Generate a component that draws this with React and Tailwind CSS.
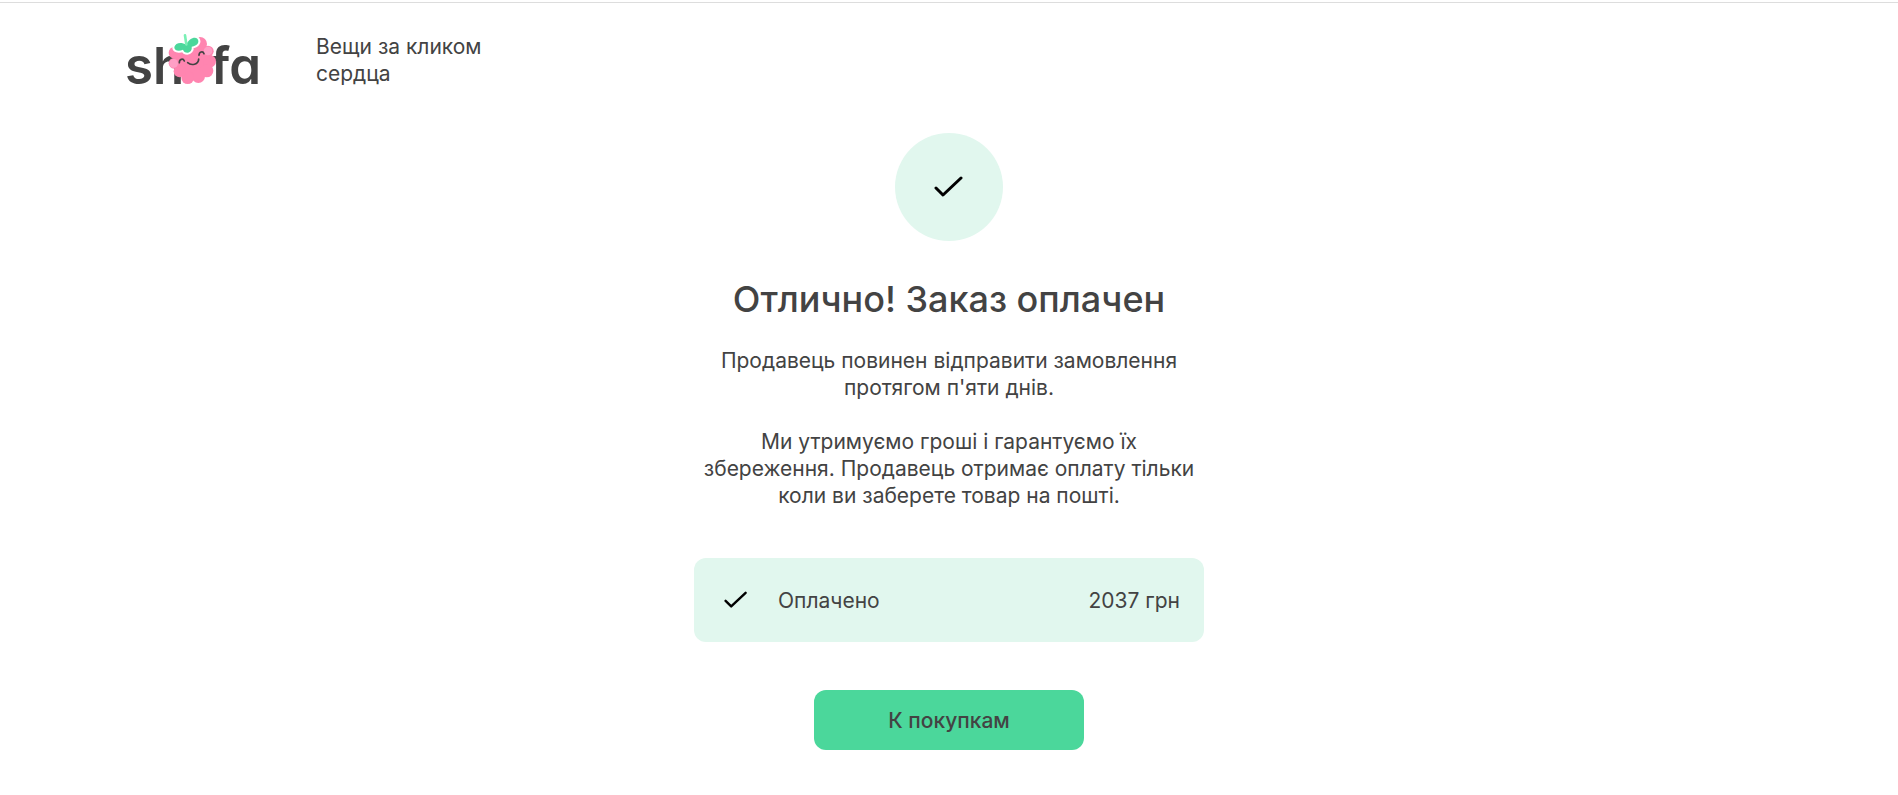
const FONT = "font-['Inter','Liberation_Sans',sans-serif]"

function Berry({ className }) {
  return (
    <svg viewBox="171 39 150 156" className={className} aria-hidden="true">
      <g fill="#ff85b0">
        <circle cx="246" cy="121" r="53" />
        <circle cx="270" cy="72" r="21" />
        <circle cx="194" cy="98" r="18" />
        <circle cx="299" cy="124" r="19" />
        <circle cx="290" cy="152" r="20" />
        <circle cx="265" cy="169" r="20" />
        <circle cx="233" cy="173" r="19" />
        <circle cx="209" cy="154" r="18" />
        <circle cx="294" cy="94" r="17" />
        <circle cx="192" cy="130" r="16" />
      </g>
      <circle cx="294" cy="93" r="13" fill="#ff9fc5" />
      <circle cx="191" cy="130" r="13" fill="#ff9fc5" />

      {/* Leaf */}
      <path
        d="M229 74C236 56 254 49 262 56C270 66 262 77 245 80C247 91 239 98 232 98C225 98 221 94 219 89C205 96 192 91 193 81C196 69 212 64 229 74Z"
        fill="#4bd79b"
        stroke="#fff"
        strokeWidth="12"
        strokeLinejoin="round"
        paintOrder="stroke"
      />
      <path d="M225 46L229 73" fill="none" stroke="#7af0b5" strokeWidth="8" strokeLinecap="round" />

      {/* Face */}
      <g fill="none" stroke="#434343" strokeWidth="5" strokeLinecap="round">
        <path d="M208 128C208 117 219 114 223 123" />
        <path d="M267 106C267 95 279 92 282 101" />
        <path d="M233 128C244 138 266 134 266 117" />
      </g>
    </svg>
  )
}

function Logo() {
  return (
    <span
      role="img"
      aria-label="shafa"
      className="relative flex justify-between w-[136px] text-[51px] leading-[66px] font-semibold [font-feature-settings:'cv11']"
    >
      <span>sh</span>
      <span>fa</span>
      <Berry className="absolute left-[42px] top-0 w-[50px] h-[52px]" />
    </span>
  )
}

function Check({ className }) {
  return (
    <svg
      viewBox="0 0 30 22"
      className={className}
      fill="none"
      stroke="#000"
      strokeWidth="3"
      strokeLinecap="round"
      strokeLinejoin="round"
      aria-hidden="true"
    >
      <path d="M2 12L9 19L27 2" />
    </svg>
  )
}

export default function App() {
  return (
    <div className={`${FONT} pt-0.5 bg-white text-[21px] leading-[27px] text-[#434343]`}>
      <header className="border-t border-[#dddddd] px-[125px] pt-[30px] flex items-start gap-[55px]">
        <a href="/" className="shrink-0">
          <Logo />
        </a>
        <p className="w-[180px]">Вещи за кликом сердца</p>
      </header>

      <main className="max-w-[510px] mx-auto pt-[34px] flex flex-col items-center text-center">
        <div className="size-[108px] rounded-full bg-[#e1f7ee] flex items-center justify-center">
          <Check className="w-[30px] h-[22px]" />
        </div>

        <h1 className="mt-9 text-[36px] leading-[44px] font-medium whitespace-nowrap">
          Отлично! Заказ оплачен
        </h1>

        <p className="mt-[26px]">
          Продавець повинен відправити замовлення
          <br />
          протягом п'яти днів.
        </p>
        <p className="mt-[27px] whitespace-nowrap">
          Ми утримуємо гроші і гарантуємо їх
          <br />
          збереження. Продавець отримає оплату тільки
          <br />
          коли ви заберете товар на пошті.
        </p>

        <div className="mt-[49px] w-full h-[84px] pl-[30px] pr-6 rounded-xl bg-[#e1f7ee] flex items-center">
          <Check className="w-6 h-[18px]" />
          <span className="ml-[30px]">Оплачено</span>
          <span className="ml-auto">2037 грн</span>
        </div>

        <button
          type="button"
          className="mt-12 w-[270px] h-[60px] rounded-xl bg-[#4bd79b] font-medium cursor-pointer"
        >
          К покупкам
        </button>
      </main>
    </div>
  )
}
